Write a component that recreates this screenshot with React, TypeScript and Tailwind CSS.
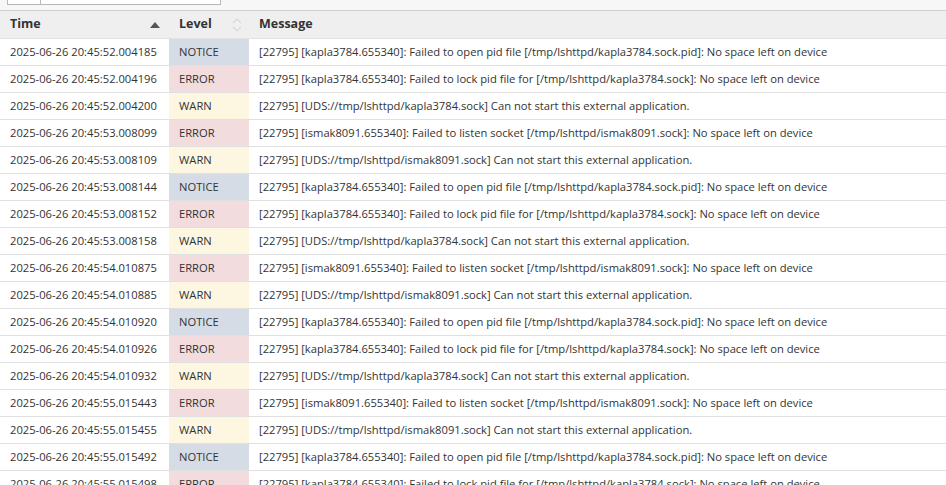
const rows: [string, string, string][] = [
  ["2025-06-26 20:45:52.004185", "NOTICE", "[22795] [kapla3784.655340]: Failed to open pid file [/tmp/lshttpd/kapla3784.sock.pid]: No space left on device"],
  ["2025-06-26 20:45:52.004196", "ERROR", "[22795] [kapla3784.655340]: Failed to lock pid file for [/tmp/lshttpd/kapla3784.sock]: No space left on device"],
  ["2025-06-26 20:45:52.004200", "WARN", "[22795] [UDS://tmp/lshttpd/kapla3784.sock] Can not start this external application."],
  ["2025-06-26 20:45:53.008099", "ERROR", "[22795] [ismak8091.655340]: Failed to listen socket [/tmp/lshttpd/ismak8091.sock]: No space left on device"],
  ["2025-06-26 20:45:53.008109", "WARN", "[22795] [UDS://tmp/lshttpd/ismak8091.sock] Can not start this external application."],
  ["2025-06-26 20:45:53.008144", "NOTICE", "[22795] [kapla3784.655340]: Failed to open pid file [/tmp/lshttpd/kapla3784.sock.pid]: No space left on device"],
  ["2025-06-26 20:45:53.008152", "ERROR", "[22795] [kapla3784.655340]: Failed to lock pid file for [/tmp/lshttpd/kapla3784.sock]: No space left on device"],
  ["2025-06-26 20:45:53.008158", "WARN", "[22795] [UDS://tmp/lshttpd/kapla3784.sock] Can not start this external application."],
  ["2025-06-26 20:45:54.010875", "ERROR", "[22795] [ismak8091.655340]: Failed to listen socket [/tmp/lshttpd/ismak8091.sock]: No space left on device"],
  ["2025-06-26 20:45:54.010885", "WARN", "[22795] [UDS://tmp/lshttpd/ismak8091.sock] Can not start this external application."],
  ["2025-06-26 20:45:54.010920", "NOTICE", "[22795] [kapla3784.655340]: Failed to open pid file [/tmp/lshttpd/kapla3784.sock.pid]: No space left on device"],
  ["2025-06-26 20:45:54.010926", "ERROR", "[22795] [kapla3784.655340]: Failed to lock pid file for [/tmp/lshttpd/kapla3784.sock]: No space left on device"],
  ["2025-06-26 20:45:54.010932", "WARN", "[22795] [UDS://tmp/lshttpd/kapla3784.sock] Can not start this external application."],
  ["2025-06-26 20:45:55.015443", "ERROR", "[22795] [ismak8091.655340]: Failed to listen socket [/tmp/lshttpd/ismak8091.sock]: No space left on device"],
  ["2025-06-26 20:45:55.015455", "WARN", "[22795] [UDS://tmp/lshttpd/ismak8091.sock] Can not start this external application."],
  ["2025-06-26 20:45:55.015492", "NOTICE", "[22795] [kapla3784.655340]: Failed to open pid file [/tmp/lshttpd/kapla3784.sock.pid]: No space left on device"],
  ["2025-06-26 20:45:55.015498", "ERROR", "[22795] [kapla3784.655340]: Failed to lock pid file for [/tmp/lshttpd/kapla3784.sock]: No space left on device"],
];

const levelBg: Record<string, string> = {
  NOTICE: "bg-[#d6dce5]",
  ERROR: "bg-[#f2dcdd]",
  WARN: "bg-[#fdf6e1]",
};

export default function App() {
  return (
    <div className="w-[946px] h-[485px] overflow-hidden bg-white text-[#333] font-['Open_Sans',sans-serif]">
      <div className="h-[11px] bg-[#f7f7f7] border-b border-[#cfcfcf] overflow-hidden">
        <div className="ml-[7px] -mt-[10px] w-[214px] h-[15px] flex border border-[#b8b8b8] bg-white">
          <div className="w-[33px] border-r border-[#b8b8b8]" />
        </div>
      </div>
      <div className="flex h-[28px] bg-[#efeff0] border-b border-[#e2e2e2] text-[12.5px] font-bold items-center">
        <div className="w-[169px] pl-[10px] pr-[9px] flex items-center justify-between">
          <span>Time</span>
          <svg width="10" height="6" viewBox="0 0 10 6"><path d="M0 6 L5 0 L10 6 Z" fill="#555" /></svg>
        </div>
        <div className="w-[90px] pl-[10px] pr-[16px] flex items-center justify-between">
          <span>Level</span>
          <svg width="12" height="16" viewBox="0 0 12 16" fill="none" stroke="#d8d8d8" strokeWidth="1.2"><path d="M2 6 L6 2 L10 6" /><path d="M2 10 L6 14 L10 10" /></svg>
        </div>
        <div className="pl-0">Message</div>
      </div>
      <div className="text-[11.2px]">
        {rows.map(([t, l, m], i) => (
          <div key={i} className="flex h-[27px] border-b border-[#e0e0e0] items-stretch">
            <div className="w-[169px] pl-[10px] flex items-center whitespace-nowrap">{t}</div>
            <div className={`w-[80px] pl-[10px] flex items-center ${levelBg[l]}`}>{l}</div>
            <div className="pl-[10px] flex items-center whitespace-nowrap">{m}</div>
          </div>
        ))}
      </div>
    </div>
  );
}
